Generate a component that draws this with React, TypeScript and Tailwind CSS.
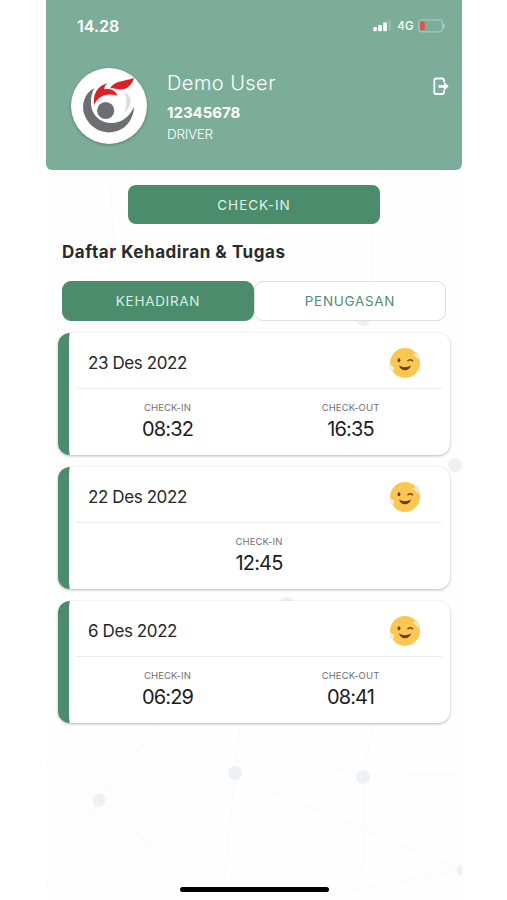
import clsx from "clsx";

type Attendance = {
    date: string;
    checkIn: string;
    checkOut?: string;
};

const attendances: Attendance[] = [
    { date: "23 Des 2022", checkIn: "08:32", checkOut: "16:35" },
    { date: "22 Des 2022", checkIn: "12:45" },
    { date: "6 Des 2022", checkIn: "06:29", checkOut: "08:41" },
];

function NetworkBackground() {
    return (
        <svg className="absolute inset-0" width="416" height="900" viewBox="0 0 416 900" fill="none">
            <g stroke="#fbfbfc" strokeWidth="2">
                <path d="M0 765 L53 800 L150 885" />
                <path d="M114 723 L53 800 L0 885" />
                <path d="M195 710 L189 773 L178 880" />
                <path d="M200 740 L317 777 L410 774" />
                <path d="M328 723 L317 777 V870" />
                <path d="M210 785 L415 870 L270 897" />
                <path d="M64 178 L68 250" />
                <path d="M326 225 V320" />
            </g>
            <g fill="#eff0f5">
                <circle cx="53" cy="800" r="6.5" />
                <circle cx="189" cy="773" r="7" />
                <circle cx="317" cy="777" r="7" />
                <circle cx="409" cy="465" r="7" />
                <circle cx="317" cy="319" r="7" />
                <circle cx="241" cy="604" r="7" />
                <circle cx="416" cy="870" r="5.5" />
            </g>
            <circle cx="65" cy="248" r="6" fill="#f8f8fb" />
        </svg>
    );
}

function StatusBar() {
    return (
        <div className="flex h-[52px] items-center justify-between pl-[31px] pr-4 text-white">
            <span className="text-[16px] font-semibold leading-none">14.28</span>
            <div className="flex items-center">
                <svg width="19" height="12" viewBox="0 0 19 12">
                    <rect x="0.3" y="7" width="3.6" height="4.2" rx="1" fill="white" />
                    <rect x="5.2" y="5" width="3.7" height="6.2" rx="1" fill="white" />
                    <rect x="10.2" y="2.2" width="3.7" height="9" rx="1" fill="white" />
                    <rect x="15.2" y="0" width="3" height="11.2" rx="1" fill="white" opacity="0.2" />
                </svg>
                <span className="ml-[5px] mt-[2px] text-[11.5px] font-medium leading-none tracking-[0.3px]">4G</span>
                <svg className="ml-1" width="28" height="14" viewBox="0 0 28 14">
                    <rect x="0.8" y="0.8" width="23.6" height="12" rx="2.5" fill="none" stroke="white" strokeOpacity="0.32" strokeWidth="1.2" />
                    <rect x="2" y="2.4" width="4.8" height="8.8" rx="2" fill="#e4504a" />
                    <path d="M25 4.2 L27.6 6.8 L25 9.4 Z" fill="white" fillOpacity="0.4" />
                </svg>
            </div>
        </div>
    );
}

function Logo() {
    return (
        <div className="size-[76px] rounded-full bg-white shadow-[0_1px_3px_rgba(0,0,0,0.3)]">
            <svg width="76" height="76" viewBox="0 0 76 76">
                <path d="M23.5 20 C13 25 9.500 38 14 48 C19 60 31 66 42 64 C54 62 62 53 63.300 38.500 C58.500 49 50 55.500 39.500 55 C28 54.500 20.500 46 20 36 C19.700 29 21 24 23.500 20 Z" fill="#6d6e71" />
                <circle cx="34.7" cy="42.5" r="8.6" fill="#6d6e71" />
                <path d="M53.300 24.300 C57.500 26 60 29 59.700 33 C59.500 38 56.500 42 53.500 45 C55.500 38 56.500 31 53.300 24.300 Z" fill="#dcdddf" />
                <path d="M23.300 37 C21.500 27 26 17.500 36.500 15.300 C34 17 33 19.500 33.500 21.500 C39 20 44.500 22.500 46.500 27.700 C37 25 27.500 27 23.300 37 Z" fill="#dc2027" />
                <path d="M39 20.500 C43 13 52 13.500 63 10 C61.500 16 56.500 21.500 50 21.500 C46 21.500 43 19.500 39 20.500 Z" fill="#dc2027" />
            </svg>
        </div>
    );
}

function Header() {
    return (
        <header className="h-[170px] rounded-b-[6px] bg-[#7bad99] text-white">
            <StatusBar />
            <div className="flex pl-[25px] pr-[13px] pt-4">
                <Logo />
                <div className="ml-5 flex-1">
                    <p className="mt-[3px] text-[20px] font-light leading-6 tracking-[0.45px]">Demo User</p>
                    <p className="mt-[8px] text-[15px] font-bold leading-5">12345678</p>
                    <p className="mt-px text-[13.5px] font-light leading-5 tracking-[-0.3px]">DRIVER</p>
                </div>
                <svg className="mt-[9px]" width="16" height="19" viewBox="0 0 16 19" fill="none">
                    <path d="M11 5.200 V3.200 Q11 1.500 9.300 1.500 H3 Q1.300 1.500 1.300 3.200 V15.300 Q1.300 17 3 17 H9.300 Q11 17 11 15.300 V13.300" stroke="white" strokeWidth="1.8" />
                    <path d="M5.500 7.900 H11 V4.900 L15.700 9.300 L11 13.700 V10.700 H5.500 Z" fill="white" />
                </svg>
            </div>
        </header>
    );
}

function WinkEmoji() {
    return (
        <svg width="32" height="32" viewBox="0 0 32 32">
            <circle cx="16" cy="16" r="15" fill="#fcc751" />
            <path d="M24 8 L28 4.500 L31.500 10 L30 13 Q27 10 24 8 Z" fill="#e3ebcf" />
            <path d="M1 17 L5.500 20.500 L4 24.500 L0.500 22 Z" fill="#e8f0dd" />
            <ellipse cx="10" cy="13.300" rx="1.400" ry="2" fill="#6b4215" />
            <path d="M18.500 14.200 Q21.300 11.200 24 14.200" stroke="#6b4215" strokeWidth="1.600" fill="none" />
            <path d="M10 18.500 Q16 22 22 18.500 Q20.500 23.300 16 23.300 Q11.500 23.300 10 18.500 Z" fill="#6b3d16" />
        </svg>
    );
}

function TimeEntry({ label, time }: { label: string; time: string }) {
    return (
        <div className="flex flex-1 flex-col items-center">
            <span className="text-[9.5px] leading-3 tracking-[0.1px] text-[#707070]">{label}</span>
            <span className="mt-px text-[20px] leading-7 tracking-[-0.85px] text-[#1c1c1c]">{time}</span>
        </div>
    );
}

function AttendanceCard({ date, checkIn, checkOut }: Attendance) {
    return (
        <div className="h-[122px] rounded-xl border-l-[11px] border-[#4a8c6c] bg-white pl-[7px] pr-2 shadow-[0_1px_3px_rgba(0,0,0,0.28)]">
            <div className="flex h-14 items-center justify-between border-b border-[#ededed] pl-3 pr-[21px] pt-[5px]">
                <span className="text-[17px] leading-6 tracking-[-0.4px] text-[#262626]">{date}</span>
                <WinkEmoji />
            </div>
            <div className="flex pt-[13px]">
                <TimeEntry label="CHECK-IN" time={checkIn} />
                {checkOut && <TimeEntry label="CHECK-OUT" time={checkOut} />}
            </div>
        </div>
    );
}

function Tab({ label, active }: { label: string; active?: boolean }) {
    return (
        <button
            className={clsx(
                "h-10 flex-1 rounded-[9px] border pt-px text-[13.5px]",
                active
                    ? "border-[#4a8c6c] bg-[#4a8c6c] tracking-[0.7px] text-[#d9efe3]"
                    : "border-[#dedee1] bg-white tracking-[0.7px] text-[#4f8e70]"
            )}
        >
            {label}
        </button>
    );
}

export default function App() {
    return (
        <div className="h-[900px] w-[507px] overflow-hidden bg-white pl-[46px] font-['Inter',sans-serif]">
            <div className="relative h-full w-[416px] overflow-hidden bg-[#fefefe]">
                <NetworkBackground />
                <div className="relative flex h-full flex-col">
                    <Header />
                    <button className="mt-[15px] h-[39px] w-[252px] self-center rounded-lg bg-[#4a8c6c] pt-px text-[13.5px] tracking-[1px] text-[#e1f3e9]">
                        CHECK-IN
                    </button>
                    <h1 className="ml-4 mt-4 text-[17px] font-bold leading-6 tracking-[0.55px] text-[#2b2b2b]">
                        Daftar Kehadiran &amp; Tugas
                    </h1>
                    <div className="mx-4 mt-[17px] flex">
                        <Tab label="KEHADIRAN" active />
                        <Tab label="PENUGASAN" />
                    </div>
                    <div className="mx-3 mt-3 flex flex-col gap-3">
                        {attendances.map((item) => (
                            <AttendanceCard key={item.date} {...item} />
                        ))}
                    </div>
                    <div className="mb-2 mt-auto h-[5px] w-[149px] self-center rounded-full bg-black" />
                </div>
            </div>
        </div>
    );
}
